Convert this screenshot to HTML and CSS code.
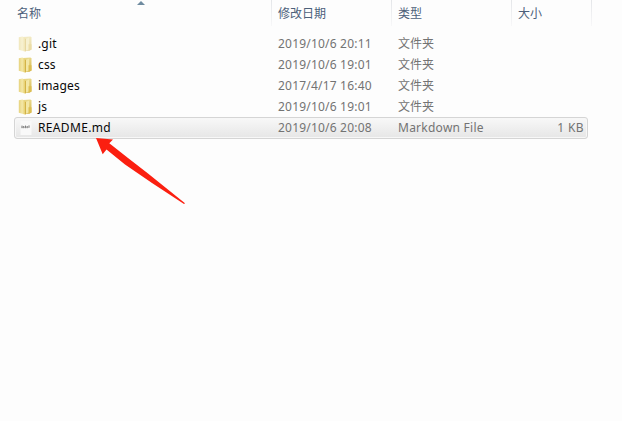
FILE: index.html
```html
<!DOCTYPE html>
<html lang="zh-CN">
<head>
<meta charset="utf-8">
<title>文件列表</title>
<link rel="stylesheet" href="styles.css">
</head>
<body>
<svg class="defs" width="0" height="0" aria-hidden="true">
  <defs>
    <linearGradient id="front" x1="0" x2="1"><stop offset="0" stop-color="#e6d27c"/><stop offset=".5" stop-color="#f4e8a8"/><stop offset="1" stop-color="#e3c962"/></linearGradient>
    <linearGradient id="back" x1="0" x2="0" y1="0" y2="1"><stop offset="0" stop-color="#e9d98c"/><stop offset="1" stop-color="#d3b448"/></linearGradient>
    <symbol id="folder" viewBox="0 0 16 16">
      <path d="M5 1 12.5.6l1 .8V13.5l-2 1.3H6z" fill="url(#back)"/>
      <path d="M7.5 3 11.2 1.6v11.8L7.8 14.6z" fill="#f3e7a6"/>
      <path d="M.8 1.2 4.5.6 7.6 2.4V15.8L.8 13.8z" fill="url(#front)"/>
      <path d="M7.5 3v12.2" stroke="#d0b044" stroke-width=".9"/>
      <path d="M10.5 8.2h3V13.5l-3 1z" fill="#ddbf52"/>
    </symbol>
  </defs>
</svg>
<main class="explorer">
  <header class="head grid">
    <div class="cell">名称</div><div class="cell">修改日期</div><div class="cell">类型</div><div class="cell">大小</div>
    <svg class="sort" viewBox="0 0 8 4"><path d="M0 4 4 0l4 4z" fill="#6f8ba0"/></svg>
  </header>
  <section class="rows">
    <div class="row grid hidden-item"><div class="name"><svg class="icon"><use href="#folder"/></svg><span>.git</span></div><div class="date">2019/10/6 20:11</div><div class="type">文件夹</div><div></div></div>
    <div class="row grid"><div class="name"><svg class="icon"><use href="#folder"/></svg><span>css</span></div><div class="date">2019/10/6 19:01</div><div class="type">文件夹</div><div></div></div>
    <div class="row grid"><div class="name"><svg class="icon"><use href="#folder"/></svg><span>images</span></div><div class="date">2017/4/17 16:40</div><div class="type">文件夹</div><div></div></div>
    <div class="row grid"><div class="name"><svg class="icon"><use href="#folder"/></svg><span>js</span></div><div class="date">2019/10/6 19:01</div><div class="type">文件夹</div><div></div></div>
    <div class="row grid selected"><div class="name"><svg class="icon" viewBox="0 0 16 16"><path d="M2.5 1h11v14h-11z" fill="#f9f9f9"/><path d="M4 5.6v2.6M5.7 6v2.2M7.5 5.6v2.6M9.2 6v2.2M11 5.4v2.4" stroke="#777" stroke-width="1"/><path d="M3.5 7.3h7" stroke="#999" stroke-width=".7"/></svg><span>README.md</span></div><div class="date">2019/10/6 20:08</div><div class="type file-type">Markdown File</div><div class="size">1 KB</div></div>
  </section>
  <svg class="arrow" viewBox="0 0 92 70"><path d="M1 0 18 1.5 14.3 5.3 33 20 53 35.5 90 65.2 89 66 57 45 30 26.5 11.5 11.5 7.7 16.3z" fill="#fb1f10"/></svg>
</main>
</body>
</html>
```
FILE: styles.css
```css
* { box-sizing: border-box; }
body {
  margin: 0;
  background: #fdfdfd;
  font: 12px/20px "Noto Sans", "Noto Sans CJK SC", sans-serif;
  color: #737373;
}
.defs { position: absolute; }
.explorer { position: relative; height: 421px; overflow: hidden; }
.grid { display: grid; grid-template-columns: 258px 120px 120px 1fr; }
.head {
  position: relative;
  width: 592px;
  height: 26px;
  margin-bottom: 7px;
  padding-left: 14px;
  color: #4c607a;
}
.head .cell {
  height: 26px;
  padding: 4px 0 0 6px;
  border-right: 1px solid;
  border-image: linear-gradient(#e3e5e8, #f8f8f9) 1;
}
.head .cell:first-child { padding-left: 3px; }
.sort { position: absolute; left: 137px; top: 1px; width: 8px; height: 4px; }
.rows { width: 574px; margin-left: 14px; }
.row { height: 21px; align-items: center; white-space: nowrap; }
.name { display: flex; align-items: center; color: #080808; letter-spacing: .15px; }
.icon { width: 16px; height: 16px; margin: 0 4px; flex: none; }
.hidden-item .icon { opacity: .5; }
.date, .type { padding-left: 6px; }
.date { letter-spacing: .2px; }
.file-type { letter-spacing: .25px; }
.size { padding-right: 4px; text-align: right; letter-spacing: .4px; }
.selected {
  height: 22px;
  border: 1px solid #d5d5d5;
  border-radius: 3px;
  background: linear-gradient(#f8f8f8, #e6e6e6);
  box-shadow: inset 0 0 0 1px #f7f7f7;
}
.selected .name { margin-left: -1px; letter-spacing: .35px; }
.selected .date, .selected .type { padding-left: 5px; }
.selected .size { padding-right: 3px; }
.arrow { position: absolute; left: 95px; top: 138px; width: 92px; height: 70px; }
```
